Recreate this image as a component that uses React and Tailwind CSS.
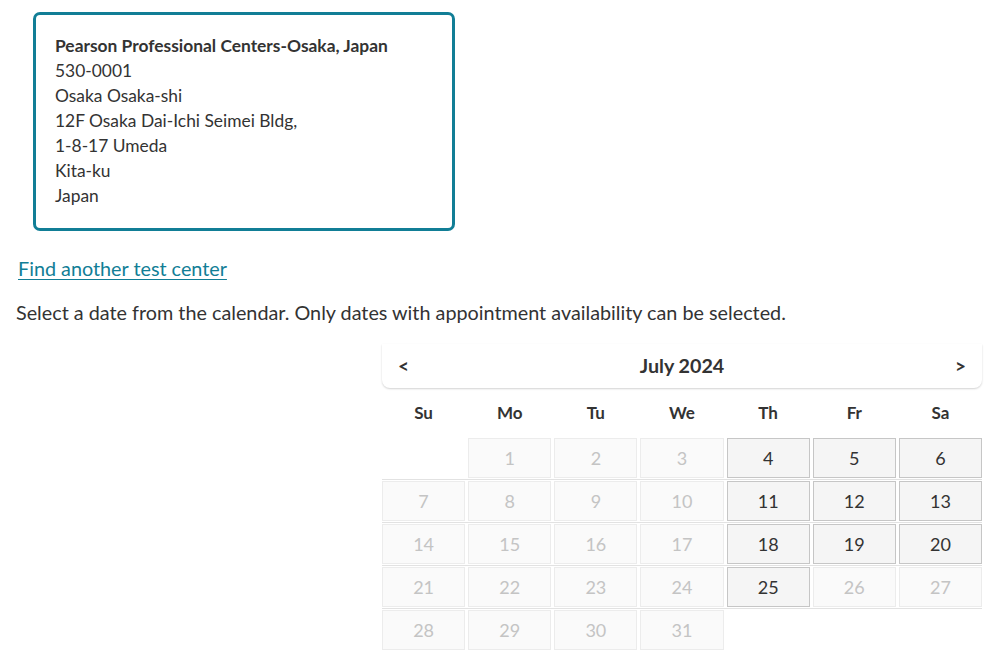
const DAYS = ['Su', 'Mo', 'Tu', 'We', 'Th', 'Fr', 'Sa'];
const AVAILABLE = new Set([4, 5, 6, 11, 12, 13, 18, 19, 20, 25]);

// July 2024 starts on a Monday
const weeks = (() => {
  const cells = [null];
  for (let d = 1; d <= 31; d++) cells.push(d);
  const rows = [];
  for (let i = 0; i < cells.length; i += 7) rows.push(cells.slice(i, i + 7));
  return rows;
})();

function DayCell({ day }) {
  if (day === null) return <div className="h-10" />;
  const open = AVAILABLE.has(day);
  return (
    <div
      className={`h-10 flex items-center justify-center text-[18px] border ${
        open
          ? 'bg-[#f5f5f5] border-[#c6c6c6] text-[#333]'
          : 'bg-[#fafafa] border-[#ececec] text-[#c4c4c4]'
      }`}
    >
      {day}
    </div>
  );
}

export default function App() {
  return (
    <div
      className="min-h-[663px] bg-white text-[#333] pl-4 pt-3"
      style={{ fontFamily: 'Lato, "Open Sans", sans-serif' }}
    >
      <div className="ml-[17px] w-[422px] border-[3px] border-[#117e96] rounded-[7px] px-[19px] pt-[18px] pb-[20px] text-[17.4px] leading-[25px]">
        <div className="font-bold">Pearson Professional Centers-Osaka, Japan</div>
        <div>530-0001</div>
        <div>Osaka Osaka-shi</div>
        <div>12F Osaka Dai-Ichi Seimei Bldg,</div>
        <div>1-8-17 Umeda</div>
        <div>Kita-ku</div>
        <div>Japan</div>
      </div>

      <a
        href="#"
        className="inline-block mt-[25px] ml-[2px] text-[19.8px] leading-[24px] text-[#117e96] underline underline-offset-[3px]"
      >
        Find another test center
      </a>

      <p className="mt-[18px] text-[19.8px] leading-[24px]">
        Select a date from the calendar. Only dates with appointment availability can be selected.
      </p>

      <div className="ml-[366px] mt-[20px] w-[600px]">
        <div className="h-[44px] flex items-center justify-between px-[16px] rounded-b-lg shadow-[0_1px_2px_rgba(0,0,0,0.18)]">
          <button className="font-bold text-[19px] text-[#333]">&lt;</button>
          <span className="font-bold text-[19.7px]">July 2024</span>
          <button className="font-bold text-[19px] text-[#333]">&gt;</button>
        </div>

        <div className="grid grid-cols-7 gap-[3px] h-[49px] items-center">
          {DAYS.map((d) => (
            <div key={d} className="text-center font-bold text-[17px]">
              {d}
            </div>
          ))}
        </div>

        {weeks.map((week, i) => (
          <div
            key={i}
            className={`grid grid-cols-7 gap-[3px] py-px ${i > 0 ? 'border-t border-[#e2e2e2]' : ''}`}
          >
            {Array.from({ length: 7 }).map((_, j) => (
              <DayCell key={j} day={week[j] ?? null} />
            ))}
          </div>
        ))}
      </div>
    </div>
  );
}
